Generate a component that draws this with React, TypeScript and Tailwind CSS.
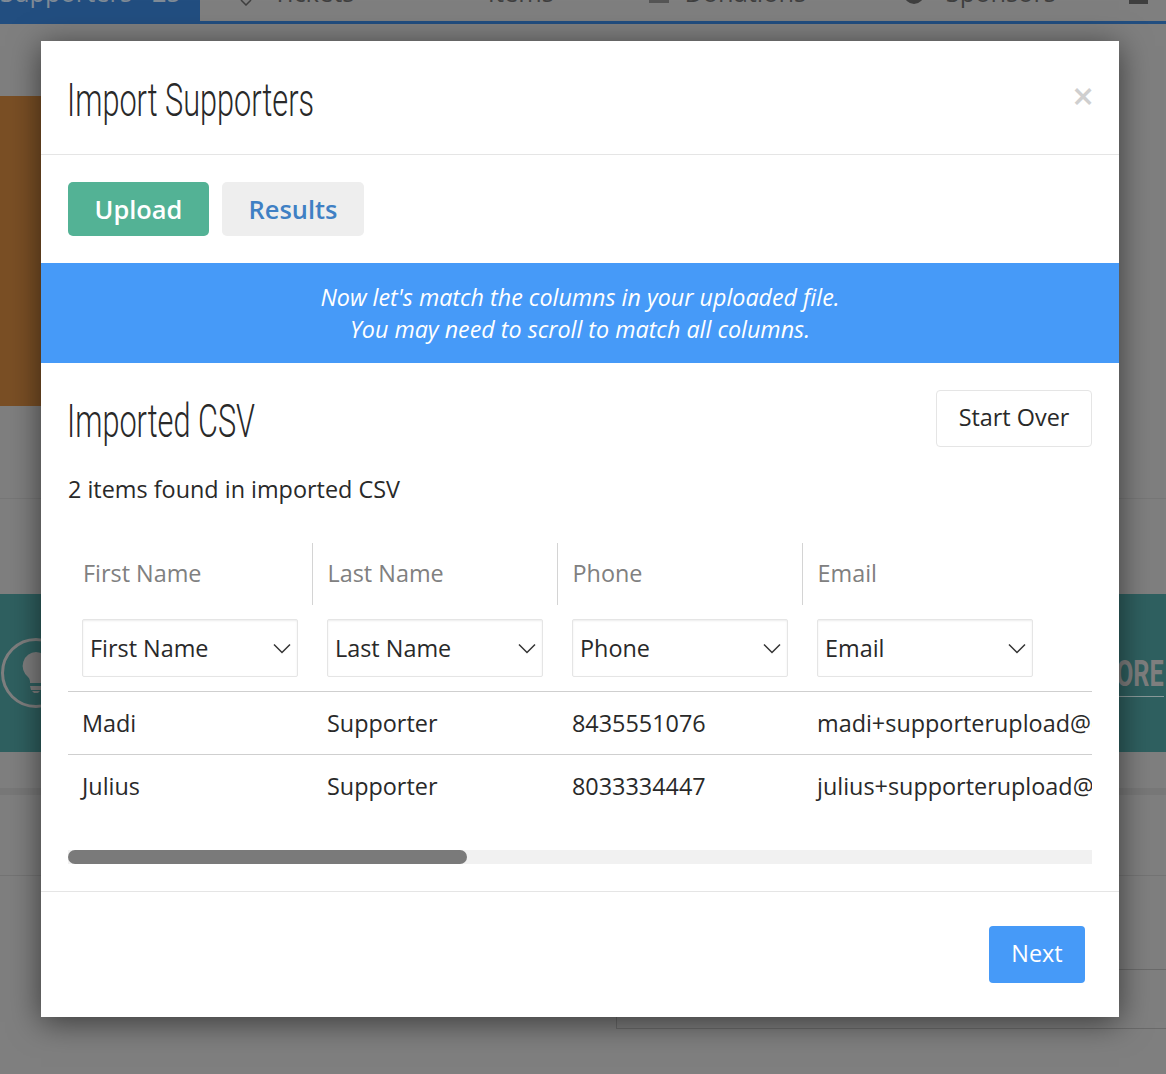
import React from "react";

const sans = "font-['Open_Sans','Liberation_Sans',sans-serif]";

const columns = [
  { label: "First Name", first: "Madi", second: "Julius" },
  { label: "Last Name", first: "Supporter", second: "Supporter" },
  { label: "Phone", first: "8435551076", second: "8033334447" },
  { label: "Email", first: "madi+supporterupload@example.com", second: "julius+supporterupload@example.com" },
];

function Chevron() {
  return (
    <svg width="18" height="11" viewBox="0 0 18 11" fill="none" stroke="#333" strokeWidth="1.5">
      <path d="M1 1.5 9 9.5 17 1.5" />
    </svg>
  );
}

function CondensedTitle({ children }: { children: string }) {
  return (
    <h2 className="-ml-px inline-block origin-left scale-x-[0.667] whitespace-nowrap font-['Roboto',sans-serif] text-[46px] leading-[56px] font-[350] text-[#292929]">
      {children}
    </h2>
  );
}

function PageBehind() {
  return (
    <div className={`${sans} h-[1074px] overflow-hidden bg-[#7f7f7f] text-[25.4px] leading-[30px] text-[#3f3f3f]`}>
      <div className="flex h-[24px] border-b-[3px] border-[#224e80]">
        <div className="flex h-[24px] w-[200px] gap-[20px] bg-[#224e80] text-[#7f8a96]">
          <span className="-mt-[23px]">Supporters</span>
          <span className="-mt-[23px]">25</span>
        </div>
        <svg className="mt-0 ml-[40px]" width="12" height="6" viewBox="0 0 12 6" fill="none" stroke="#3f3f3f" strokeWidth="1.5">
          <path d="M1 0 6 5 11 0" />
        </svg>
        <div className="-mt-[23px] ml-[21px]">Tickets</div>
        <div className="-mt-[26px] ml-[25px] text-[#224e80]">7</div>
        <div className="-mt-[23px] ml-[94px]">Items</div>
        <div className="-mt-[26px] ml-[22px] text-[#224e80]">5</div>
        <div className="ml-[59px] h-[3px] w-[20px] bg-[#555]" />
        <div className="-mt-[23px] ml-[15px]">Donations</div>
        <div className="-mt-[26px] ml-[25px] text-[#224e80]">9</div>
        <div className="ml-[58px] -mt-[16px] size-[20px] rounded-full bg-[#3f3f3f]" />
        <div className="-mt-[23px] ml-[22px]">Sponsors</div>
        <div className="ml-[73px] -mt-[10px] h-[14px] w-[19px] bg-[#3f3f3f]" />
      </div>
      <div className="mt-[72px] h-[310px] w-[300px] bg-[#7a4f25]" />
      <div className="mt-[92px] h-px bg-[#777]" />
      <div className="mt-[95px] flex h-[158px] items-center justify-between bg-[#2f6060] pr-[2px] pl-[1px]">
        <div className="flex size-[70px] items-center justify-center rounded-full border-[3px] border-[#7f7f7f]">
          <svg width="32" height="44" viewBox="0 0 32 44" fill="#7f7f7f">
            <path d="M16 1a14 14 0 0 0-8 25c2 2 2 4 2 6h12c0-2 0-4 2-6a14 14 0 0 0-8-25ZM10 35h12l-1 4H11ZM12 40h8l-2 2h-4Z" />
          </svg>
        </div>
        <div className="mt-[6px] border-b border-[#8a9a9a] pb-[4px] font-['Roboto',sans-serif] text-[36px] leading-[36px] font-bold text-[#7f7f7f]">
          <span className="inline-block origin-right scale-x-[0.7]">MORE</span>
        </div>
      </div>
      <div className="mt-[36px] h-[7px] bg-[#787878]" />
      <div className="mt-[80px] h-px bg-[#747474]" />
      <div className="mt-[93px] ml-[616px] h-[60px] border-y border-l border-[#6a6a6a]" />
    </div>
  );
}

export default function App() {
  return (
    <div className="relative h-[1074px] w-[1166px] overflow-hidden">
      <PageBehind />

      <div className={`${sans} absolute top-[41px] left-[41px] flex h-[976px] w-[1078px] flex-col bg-white text-[#292929] shadow-[0_5px_30px_rgba(0,0,0,0.55)]`}>
        <div className="flex h-[114px] items-start justify-between border-b border-[#e5e5e5] pr-[25px] pl-[27px]">
          <div className="mt-[31px]">
            <CondensedTitle>Import Supporters</CondensedTitle>
          </div>
          <button className="mt-[29px] text-[38px] leading-[50px] font-semibold text-[#cfcfcf]">×</button>
        </div>

        <div className="flex gap-[13px] px-[27px] pt-[27px]">
          <button className="flex h-[54px] w-[141px] items-center justify-center rounded-[5px] bg-[#53b295] text-[25.4px] font-semibold text-white">
            Upload
          </button>
          <button className="flex h-[54px] w-[142px] items-center justify-center rounded-[5px] bg-[#eeeeee] text-[25.4px] font-semibold text-[#3f80c4]">
            Results
          </button>
        </div>

        <div className="mt-[27px] flex h-[100px] flex-col justify-center bg-[#469af8] text-center text-[23.3px] leading-[32px] text-white italic">
          <p>Now let's match the columns in your uploaded file.</p>
          <p>You may need to scroll to match all columns.</p>
        </div>

        <div className="flex flex-1 flex-col px-[27px]">
          <div className="mt-[27px] flex items-start justify-between">
            <div className="mt-[3px]">
              <CondensedTitle>Imported CSV</CondensedTitle>
            </div>
            <button className="h-[57px] w-[156px] rounded-[4px] border border-[#e5e5e5] bg-white pb-[2px] text-[23.4px] text-[#292929]">
              Start Over
            </button>
          </div>
          <p className="mt-[23px] text-[23.4px] leading-[34px]">2 items found in imported CSV</p>

          <div className="mt-[37px] w-[1024px] overflow-hidden">
            <table className="w-[1024px] table-fixed text-left text-[23.4px]">
              <colgroup>
                <col className="w-[244px]" />
                <col className="w-[245px]" />
                <col className="w-[245px]" />
                <col className="w-[290px]" />
              </colgroup>
              <thead>
                <tr className="h-[62px]">
                  {columns.map((c, i) => (
                    <th key={c.label} className={`pl-[15px] font-normal text-[#808080] ${i < 3 ? "border-r border-[#d4d4d4]" : ""}`}>
                      {c.label}
                    </th>
                  ))}
                </tr>
                <tr className="h-[86px] border-b border-[#cfcfcf]">
                  {columns.map((c, i) => (
                    <th key={c.label} className={`pb-[14px] align-bottom font-normal ${i === 0 ? "pl-[14px]" : "pl-[15px]"}`}>
                      <div className="flex h-[58px] w-[216px] items-center justify-between rounded-[2px] border border-[#e5e5e5] pt-[2px] pr-[6px] pl-[7px] shadow-[inset_0_1px_2px_rgba(0,0,0,0.08)]">
                        {c.label}
                        <Chevron />
                      </div>
                    </th>
                  ))}
                </tr>
              </thead>
              <tbody>
                <tr className="h-[63px] border-b border-[#cfcfcf]">
                  {columns.map((c, i) => (
                    <td key={c.label} className={`overflow-hidden pt-[2px] whitespace-nowrap ${i === 0 ? "pl-[14px]" : "pl-[15px]"}`}>{c.first}</td>
                  ))}
                </tr>
                <tr className="h-[63px]">
                  {columns.map((c, i) => (
                    <td key={c.label} className={`overflow-hidden pt-[2px] whitespace-nowrap ${i === 0 ? "pl-[14px]" : "pl-[15px]"}`}>{c.second}</td>
                  ))}
                </tr>
              </tbody>
            </table>
          </div>

          <div className="mt-[33px] h-[14px] w-[1024px] bg-[#f1f1f1]">
            <div className="h-[14px] w-[399px] rounded-full bg-[#7a7a7a]" />
          </div>
        </div>

        <div className="flex h-[126px] items-start justify-end border-t border-[#e5e5e5] pt-[34px] pr-[34px]">
          <button className="h-[57px] w-[96px] rounded-[4px] bg-[#469af8] pb-[1px] text-[23.4px] text-white">Next</button>
        </div>
      </div>
    </div>
  );
}
